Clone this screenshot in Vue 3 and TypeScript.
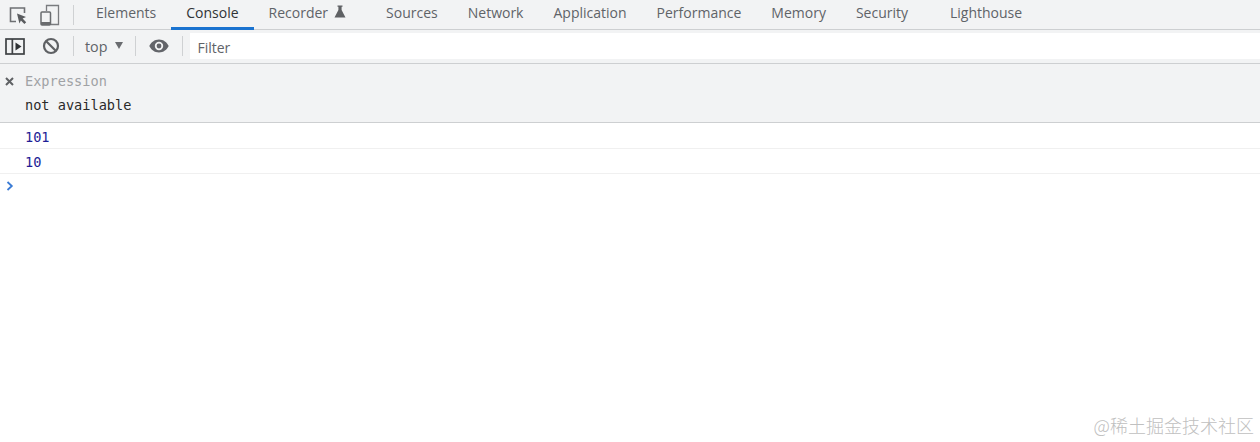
<script setup lang="ts">
const tabs = [
  { name: 'Elements', cls: '' },
  { name: 'Console', cls: 'active' },
  { name: 'Recorder', cls: 'recorder' },
  { name: 'Sources', cls: '' },
  { name: 'Network', cls: '' },
  { name: 'Application', cls: '' },
  { name: 'Performance', cls: '' },
  { name: 'Memory', cls: '' },
  { name: 'Security', cls: 'security' },
  { name: 'Lighthouse', cls: '' },
]
</script>

<template>
  <div class="page">
    <div class="tabbar">
      <div class="tool-icons">
        <svg class="inspect" width="20" height="20" viewBox="0 0 20 20" fill="none">
          <path d="M8 16.5H2.5V3H16.5V8" stroke="#6e7073" stroke-width="1.6" />
          <path d="M9 8.5L18 12L14.6 13.6L18.2 17.2L16.4 19L12.9 15.4L11.4 18.6Z" fill="#5a5c5f" />
        </svg>
        <svg class="device" width="20" height="22" viewBox="0 0 20 22" fill="none">
          <path d="M6.5 7V1.5H18.5V20.5H11" stroke="#7a7c7f" stroke-width="1.3" />
          <rect x="1" y="8" width="9.5" height="13" rx="1" stroke="#6a6c6f" stroke-width="1.5" />
          <rect x="1" y="18" width="9.5" height="3" fill="#6a6c6f" />
        </svg>
        <span class="divider tab-divider"></span>
      </div>
      <div v-for="t in tabs" :key="t.name" class="tab" :class="t.cls">
        {{ t.name }}
        <svg v-if="t.cls === 'recorder'" class="flask" width="12" height="13" viewBox="0 0 12 13">
          <path d="M3.5 0.5H8.5V1.8H7.6V5L11.5 12.5H0.5L4.4 5V1.8H3.5Z" fill="#5f6164" />
        </svg>
      </div>
    </div>

    <div class="toolbar">
      <svg class="sidebar-icon" width="20" height="17" viewBox="0 0 20 17" fill="none">
        <rect x="1" y="1" width="18" height="15" stroke="#3f4144" stroke-width="1.7" />
        <rect x="6.5" y="1" width="1.7" height="15" fill="#3f4144" />
        <path d="M10.5 4.5L16.5 8.5L10.5 12.5Z" fill="#2f3134" />
      </svg>
      <svg class="block-icon" width="18" height="18" viewBox="0 0 18 18" fill="none">
        <circle cx="9" cy="9" r="7" stroke="#5f6164" stroke-width="2.2" />
        <path d="M4 4L14 14" stroke="#5f6164" stroke-width="2.2" />
      </svg>
      <span class="divider d1"></span>
      <span class="context">top</span>
      <span class="caret"></span>
      <span class="divider d2"></span>
      <svg class="eye" width="20" height="14" viewBox="0 0 20 14">
        <path fill-rule="evenodd" d="M10 0.5C14.5 0.5 18 3.4 19.7 7C18 10.6 14.5 13.5 10 13.5C5.5 13.5 2 10.6 0.3 7C2 3.4 5.5 0.5 10 0.5ZM10 2.8A4.2 4.2 0 1 0 10 11.2A4.2 4.2 0 1 0 10 2.8Z" fill="#63656a" />
        <circle cx="10" cy="7" r="2.4" fill="#63656a" />
      </svg>
      <span class="divider d3"></span>
      <div class="filter">Filter</div>
    </div>

    <div class="watch">
      <div class="watch-line">
        <svg class="close" width="9" height="9" viewBox="0 0 9 9">
          <path d="M1 1L8 8M8 1L1 8" stroke="#5f6164" stroke-width="2" />
        </svg>
        <span class="expression">Expression</span>
      </div>
      <div class="result">not available</div>
    </div>

    <div class="row">101</div>
    <div class="row second">10</div>
    <div class="prompt">
      <svg width="8" height="10" viewBox="0 0 8 10" fill="none">
        <path d="M1.5 1L5.8 5L1.5 9" stroke="#3a7bd5" stroke-width="1.8" />
      </svg>
    </div>

    <div class="watermark">@稀土掘金技术社区</div>
  </div>
</template>

<style scoped>
.page {
  position: relative;
  width: 1260px;
  height: 442px;
  overflow: hidden;
  background: #fff;
  font-family: "Open Sans", "Noto Sans", sans-serif;
}
.tabbar {
  display: flex;
  height: 30px;
  box-sizing: border-box;
  background: #f2f3f4;
  border-bottom: 1px solid #cdcfd1;
}
.tool-icons {
  display: flex;
  align-items: center;
  width: 81px;
  flex: none;
  padding-left: 8px;
  box-sizing: border-box;
}
.inspect { margin-top: 1px; }
.device { margin-left: 12px; }
.divider {
  display: block;
  width: 1px;
  height: 20px;
  background: #cfd1d3;
  flex: none;
}
.tab-divider { margin-left: 13px; }
.tab {
  display: flex;
  align-items: center;
  box-sizing: border-box;
  height: 30px;
  padding: 0 15px 6px;
  font-size: 14px;
  color: #5f6368;
  white-space: nowrap;
}
.tab.active {
  color: #303336;
  border-bottom: 3px solid #1a73d0;
  padding-bottom: 3px;
}
.tab.recorder { padding-right: 43px; position: relative; }
.flask { position: absolute; left: 80px; top: 5px; }
.tab.security { padding-right: 27px; }
.toolbar {
  display: flex;
  align-items: center;
  height: 34px;
  box-sizing: border-box;
  padding: 3px 0 4px 5px;
  background: #f2f3f4;
  border-bottom: 1px solid #cdcfd1;
}
.block-icon { margin-left: 17px; }
.d1 { margin-left: 13px; }
.context {
  margin-left: 11px;
  font-size: 14.3px;
  color: #5f6368;
}
.caret {
  margin-left: 8px;
  margin-top: -1px;
  width: 0;
  height: 0;
  border-left: 4.5px solid transparent;
  border-right: 4.5px solid transparent;
  border-top: 7px solid #6a6c70;
}
.d2 { margin-left: 12px; }
.eye { margin-left: 13px; }
.d3 { margin-left: 13px; }
.filter {
  flex: 1;
  height: 26px;
  margin-left: 7px;
  padding: 2px 0 0 7px;
  box-sizing: border-box;
  display: flex;
  align-items: center;
  background: #fff;
  font-size: 14px;
  color: #5f6368;
}
.watch {
  height: 59px;
  box-sizing: border-box;
  background: #f2f3f4;
  border-bottom: 1px solid #cdcfd1;
  font-family: "DejaVu Sans Mono", monospace;
  font-size: 13.6px;
  padding-top: 6px;
}
.watch-line {
  display: flex;
  align-items: center;
  height: 22px;
  padding-left: 5px;
}
.expression { margin-left: 11px; color: #a0a2a5; }
.result { padding-left: 25px; height: 24px; line-height: 27px; color: #2a2a2a; }
.row {
  height: 26px;
  box-sizing: border-box;
  padding: 3px 0 0 25px;
  border-bottom: 1px solid #f0f0f0;
  font-family: "DejaVu Sans Mono", monospace;
  font-size: 13.6px;
  line-height: 22px;
  color: #1e1e96;
}
.row.second { height: 25px; padding-top: 2px; }
.prompt {
  height: 24px;
  padding-left: 6px;
  display: flex;
  align-items: center;
}
.watermark {
  position: absolute;
  right: 6px;
  top: 412px;
  font-family: "Noto Sans CJK SC", sans-serif;
  font-weight: 300;
  font-size: 18px;
  line-height: 26px;
  color: #c0c0c0;
}
</style>
